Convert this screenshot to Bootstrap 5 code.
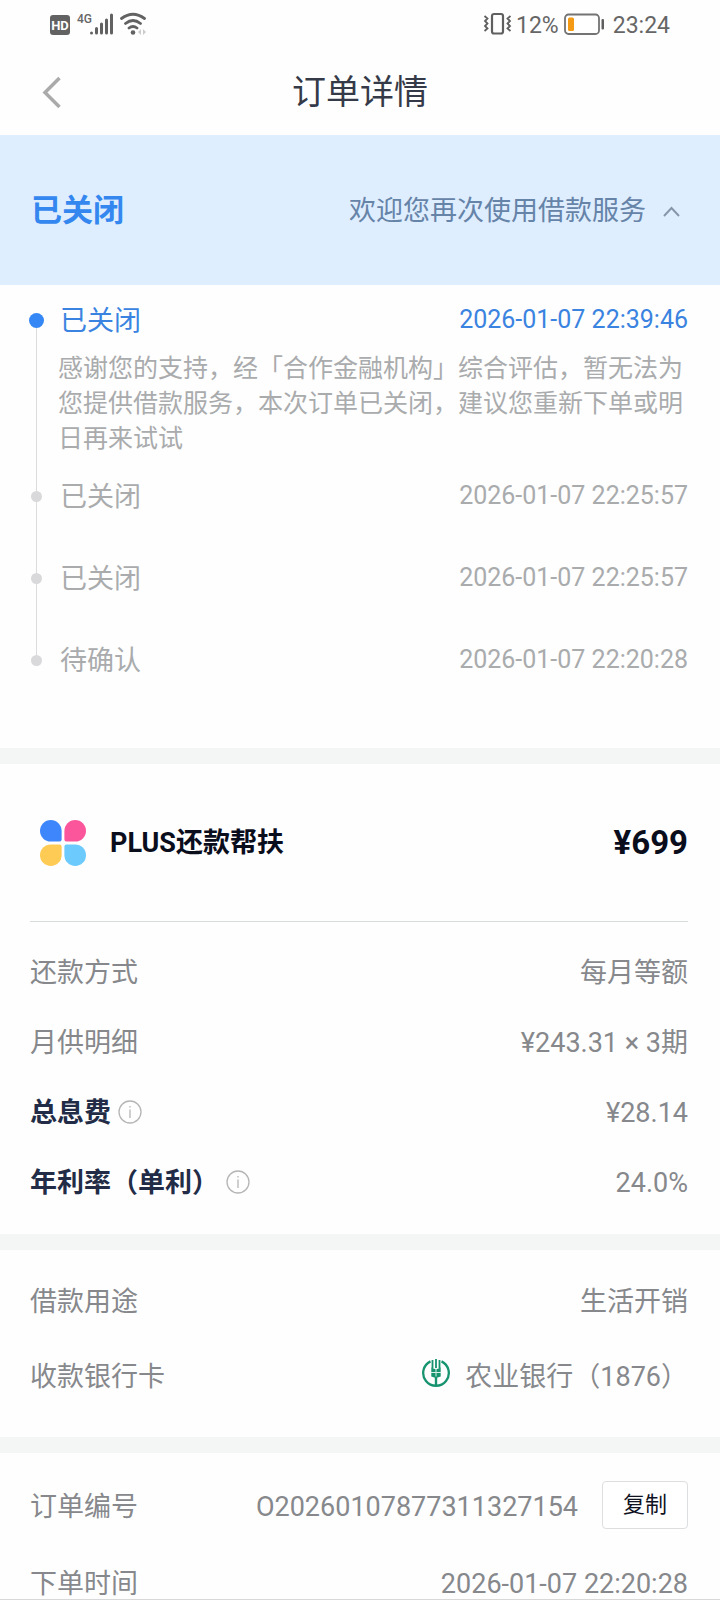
<!DOCTYPE html>
<html lang="zh-CN">
<head>
<meta charset="utf-8">
<meta name="viewport" content="width=device-width, initial-scale=1">
<title>订单详情</title>
<link rel="stylesheet" href="https://cdn.jsdelivr.net/npm/bootstrap@5.3.0/dist/css/bootstrap.min.css">
<style>
  body { font-family: Roboto, "Noto Sans CJK SC", sans-serif; font-size: 27px; line-height: 36px; color: #86888c; background: #fefefe; }
  .side { padding-left: 30px; padding-right: 32px; }
  .status-bar { height: 48px; padding: 0 50px 0 49px; font-size: 23px; color: #666; }
  .status-text { padding-top: 3px; }
  .title-bar { height: 87px; padding: 0 42px; }
  .title-bar h1 { font-size: 34px; line-height: 48px; color: #353a48; }
  .title-side { width: 20px; }
  .banner { height: 150px; padding-top: 2px; background: #deeeff; color: #6683a8; }
  .banner h2 { font-size: 31px; line-height: 40px; padding-left: 1px; color: #3487ef; }
  .banner .btn { font-size: 27px; line-height: 36px; color: inherit; padding: 0 8px 0 0; gap: 17px; }
  .timeline { padding-top: 18px; padding-bottom: 23px; color: #a9abad; }
  .step { min-height: 82px; }
  .step time { font-size: 25px; line-height: 33px; }
  .step-body { padding-left: 15px; }
  .step-name { padding-left: 2px; }
  .step-note { font-size: 25px; line-height: 35px; padding: 12px 0 23px; }
  .rail { width: 13px; }
  .rail-top, .rail-line { width: 1px; background: #dcdcde; }
  .rail-top { height: 12px; }
  .rail-dot { width: 11px; height: 11px; border-radius: 50%; background: #d9d9db; flex: none; }
  .step:first-child .rail-top { background: none; height: 10px; }
  .step:first-child .rail-dot { width: 15px; height: 15px; background: #3487f5; }
  .step:first-child .step-name, .step:first-child time { color: #3a83e0; }
  .step:last-child .rail-line { background: none; }
  .gutter { height: 16px; background: #f4f6f6; }
  .product { height: 158px; margin-left: 30px; margin-right: 32px; border-bottom: 1px solid #d9dcdc; color: #0a0d1c; }
  .product h2 { font-size: 27px; line-height: 36px; }
  .product-icon { margin: 0 24px 0 10px; }
  .price { font-size: 33px; line-height: 40px; }
  .loan { padding-top: 16px; padding-bottom: 16px; }
  .loan .line-item { height: 70px; }
  .strong-label { color: #222c47; }
  .info-btn { padding: 0 0 2px; margin-left: 7px; line-height: 0; border: 0; }
  .account { padding-top: 14px; padding-bottom: 23px; }
  .account .line-item { height: 75px; }
  .bank { gap: 15px; }
  .bank svg { margin-bottom: 8px; }
  .order { padding-top: 28px; border-bottom: 1px solid #d8d8d8; }
  .order .line-item + .line-item { margin-top: 40px; line-height: 30px; }
  .order-text { padding-top: 4px; }
  .order-id { gap: 24px; }
  .copy-btn { width: 86px; height: 48px; padding: 0; font-size: 22px; line-height: 30px; color: #10131f; border: 1px solid #dcdee0; border-radius: 4px; background: #fff; }
</style>
</head>
<body>
<div class="status-bar d-flex justify-content-between align-items-center">
  <svg width="98" height="24" viewBox="0 0 98 24" role="img" aria-label="HD 4G">
    <rect x="1" y="3" width="20" height="20" rx="3" fill="#626262"/>
    <text x="11" y="18" text-anchor="middle" font-family="Roboto" font-weight="700" font-size="13" fill="#fff">HD</text>
    <text x="28" y="11" font-family="Roboto" font-weight="500" font-size="12" fill="#666">4G</text>
    <g stroke="#626262" stroke-width="3" stroke-linecap="round">
      <path d="M42.500 21v0M47.500 16.500V21M52.500 12V21M57.500 8V21M62.500 3V21"/>
    </g>
    <g fill="none" stroke="#626262" stroke-width="2.800" stroke-linecap="round">
      <path d="M72.500 6.500Q84 -2 95.500 6.500M76.500 11.500Q84 5.500 91.500 11.500M80 16Q84 13 88 16"/>
    </g>
    <circle cx="84" cy="20.500" r="2.300" fill="#626262"/>
    <path d="M92 17v6l-3-3zM94 17v6l3-3z" fill="#ccc"/>
  </svg>
  <div class="d-flex align-items-center">
    <svg width="29" height="24" viewBox="0 0 29 24" class="me-1" aria-hidden="true" fill="none" stroke="#5f5f5f">
      <rect x="9" y="2" width="11" height="19.500" rx="2" stroke-width="2.200"/>
      <path d="M1.500 4l3 2.500-2.500 2.500 2.500 2.500-2.500 2.500 2.500 2.500-3 2.500M27.500 4l-3 2.500 2.500 2.500-2.500 2.500 2.500 2.500-2.500 2.500 3 2.500" stroke-width="1.800"/>
    </svg>
    <span class="status-text">12%</span>
    <svg width="42" height="24" viewBox="0 0 42 24" class="ms-1 me-2" aria-hidden="true">
      <rect x="2" y="2.500" width="34" height="19.500" rx="3.500" fill="#fff" stroke="#737373" stroke-width="1.800"/>
      <rect x="5" y="5.500" width="6" height="13.500" rx="1.500" fill="#f59a14"/>
      <rect x="38.500" y="7" width="2.500" height="10.500" rx="1" fill="#5f5f5f"/>
    </svg>
    <span class="status-text">23:24</span>
  </div>
</div>

<header class="title-bar d-flex align-items-center justify-content-between">
  <a href="#" class="title-side d-flex" aria-label="返回">
    <svg width="20" height="32" viewBox="0 0 20 32" fill="none" stroke="#aaa" stroke-width="3.500"><path d="M17.500 2L3 16.500L17.500 31"/></svg>
  </a>
  <h1 class="m-0 fw-normal">订单详情</h1>
  <span class="title-side"></span>
</header>

<main>
  <section class="banner side d-flex align-items-center justify-content-between">
    <h2 class="m-0 fw-bold">已关闭</h2>
    <button type="button" class="btn border-0 d-flex align-items-center" aria-expanded="true">
      欢迎您再次使用借款服务
      <svg width="17" height="11" viewBox="0 0 17 11" fill="none" stroke="#8797aa" stroke-width="2"><path d="M1 10L8.500 2L16 10"/></svg>
    </button>
  </section>

  <ol class="timeline side list-unstyled m-0">
    <li class="step d-flex">
      <span class="rail d-flex flex-column align-items-center"><span class="rail-top"></span><span class="rail-dot"></span><span class="rail-line flex-grow-1"></span></span>
      <div class="step-body flex-grow-1">
        <div class="d-flex justify-content-between"><span class="step-name">已关闭</span><time>2026-01-07 22:39:46</time></div>
        <p class="step-note m-0">感谢您的支持，经「合作金融机构」综合评估，暂无法为您提供借款服务，本次订单已关闭，建议您重新下单或明日再来试试</p>
      </div>
    </li>
    <li class="step d-flex">
      <span class="rail d-flex flex-column align-items-center"><span class="rail-top"></span><span class="rail-dot"></span><span class="rail-line flex-grow-1"></span></span>
      <div class="step-body flex-grow-1 d-flex justify-content-between"><span class="step-name">已关闭</span><time>2026-01-07 22:25:57</time></div>
    </li>
    <li class="step d-flex">
      <span class="rail d-flex flex-column align-items-center"><span class="rail-top"></span><span class="rail-dot"></span><span class="rail-line flex-grow-1"></span></span>
      <div class="step-body flex-grow-1 d-flex justify-content-between"><span class="step-name">已关闭</span><time>2026-01-07 22:25:57</time></div>
    </li>
    <li class="step d-flex">
      <span class="rail d-flex flex-column align-items-center"><span class="rail-top"></span><span class="rail-dot"></span><span class="rail-line flex-grow-1"></span></span>
      <div class="step-body flex-grow-1 d-flex justify-content-between"><span class="step-name">待确认</span><time>2026-01-07 22:20:28</time></div>
    </li>
  </ol>

  <div class="gutter"></div>

  <section>
    <div class="product d-flex align-items-center">
      <svg class="product-icon" width="46" height="46" viewBox="0 0 46 46" aria-hidden="true">
        <path d="M10.800 0A10.800 10.800 0 0 1 21.600 10.800V19.600Q21.600 21.600 19.600 21.600H10.800A10.800 10.800 0 0 1 10.800 0Z" fill="#3d86fb"/>
        <path d="M35.200 0A10.800 10.800 0 0 1 35.200 21.600H26.400Q24.400 21.600 24.400 19.600V10.800A10.800 10.800 0 0 1 35.200 0Z" fill="#fb569b"/>
        <path d="M10.800 24.400H19.600Q21.600 24.400 21.600 26.400V35.200A10.800 10.800 0 1 1 10.800 24.400Z" fill="#fecb55"/>
        <path d="M26.400 24.400H35.200A10.800 10.800 0 1 1 24.400 35.200V26.400Q24.400 24.400 26.400 24.400Z" fill="#6dcafd"/>
      </svg>
      <h2 class="m-0 fw-bold">PLUS还款帮扶</h2>
      <span class="price fw-bold ms-auto">¥699</span>
    </div>
    <div class="loan side">
      <div class="line-item d-flex align-items-center justify-content-between"><span>还款方式</span><span>每月等额</span></div>
      <div class="line-item d-flex align-items-center justify-content-between"><span>月供明细</span><span>¥243.31 × 3期</span></div>
      <div class="line-item d-flex align-items-center justify-content-between">
        <span class="d-flex align-items-center"><span class="strong-label fw-bold">总息费</span>
          <button type="button" class="btn info-btn" aria-label="总息费说明"><svg width="24" height="24" viewBox="0 0 24 24" fill="none" stroke="#b5b5b7"><circle cx="12" cy="12" r="11" stroke-width="1.300"/><path d="M12 9.500V18M12 6V7.500" stroke-width="1.300"/></svg></button></span>
        <span>¥28.14</span>
      </div>
      <div class="line-item d-flex align-items-center justify-content-between">
        <span class="d-flex align-items-center"><span class="strong-label fw-bold">年利率（单利）</span>
          <button type="button" class="btn info-btn" aria-label="年利率说明"><svg width="24" height="24" viewBox="0 0 24 24" fill="none" stroke="#b5b5b7"><circle cx="12" cy="12" r="11" stroke-width="1.300"/><path d="M12 9.500V18M12 6V7.500" stroke-width="1.300"/></svg></button></span>
        <span>24.0%</span>
      </div>
    </div>
  </section>

  <div class="gutter"></div>

  <section class="account side">
    <div class="line-item d-flex align-items-center justify-content-between"><span>借款用途</span><span>生活开销</span></div>
    <div class="line-item d-flex align-items-center justify-content-between">
      <span>收款银行卡</span>
      <span class="bank d-flex align-items-center">
        <svg width="28" height="28" viewBox="0 0 28 28" aria-hidden="true" fill="none" stroke="#17936f">
          <path d="M8.500 2.400A12.800 12.800 0 1 0 19.500 2.400" stroke-width="2.300"/>
          <path d="M14 18V27" stroke-width="2.400"/>
          <path d="M10.500 1V9M17.500 1V9M14 0V9" stroke-width="1.800"/>
          <path d="M9.300 8.500L14 10.500L18.700 8.500V17.500L14 19L9.300 17.500Z" fill="#17936f" stroke="none"/>
          <path d="M14 9V17.500M9 13.500H19" stroke="#d7efe7" stroke-width="1"/>
        </svg>
        <span>农业银行（1876）</span>
      </span>
    </div>
  </section>

  <div class="gutter"></div>

  <section class="order side">
    <div class="line-item d-flex align-items-center justify-content-between">
      <span class="order-text">订单编号</span>
      <span class="order-id d-flex align-items-center"><span class="order-text">O20260107877311327154</span><button type="button" class="btn copy-btn">复制</button></span>
    </div>
    <div class="line-item d-flex align-items-center justify-content-between"><span>下单时间</span><time>2026-01-07 22:20:28</time></div>
  </section>
</main>
<script src="https://cdn.jsdelivr.net/npm/bootstrap@5.3.0/dist/js/bootstrap.bundle.min.js"></script>
</body>
</html>
